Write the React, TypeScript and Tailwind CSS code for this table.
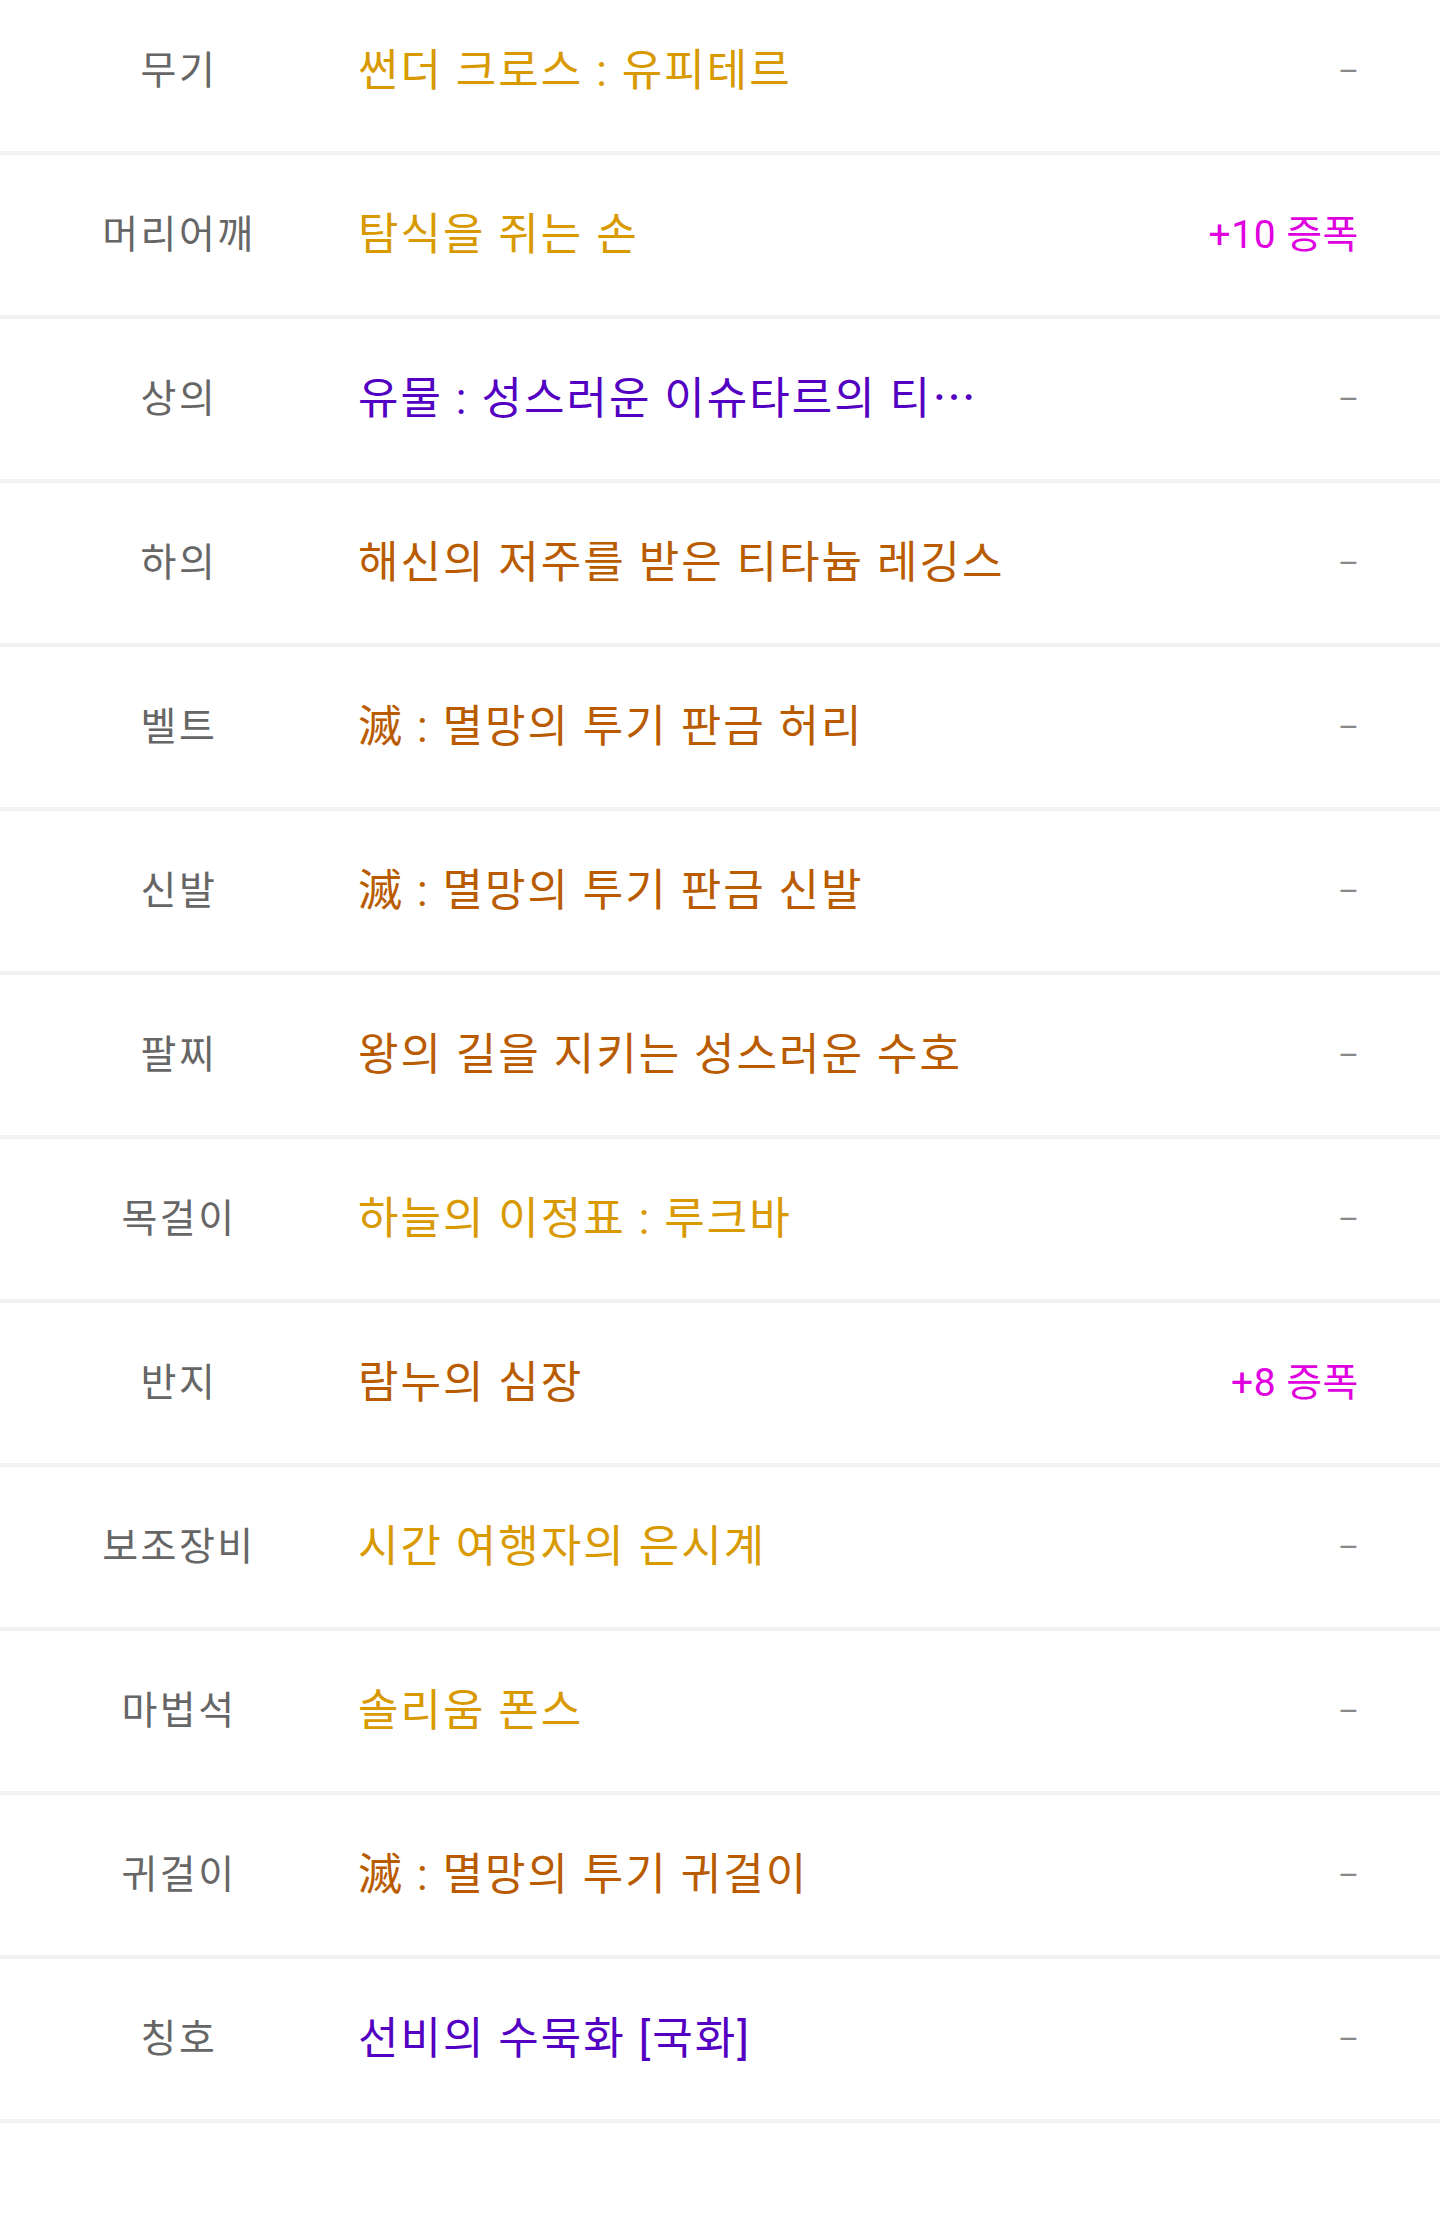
const GOLD = "text-[#d89a00]";
const ORANGE = "text-[#b95b00]";
const PURPLE = "text-[#5300c2]";

type Slot = {
	label: string;
	name: string;
	color: string;
	amp?: string;
};

const slots: Slot[] = [
	{ label: "무기", name: "썬더 크로스 : 유피테르", color: GOLD },
	{ label: "머리어깨", name: "탐식을 쥐는 손", color: GOLD, amp: "+10 증폭" },
	{ label: "상의", name: "유물 : 성스러운 이슈타르의 티⋯", color: PURPLE },
	{ label: "하의", name: "해신의 저주를 받은 티타늄 레깅스", color: ORANGE },
	{ label: "벨트", name: "滅 : 멸망의 투기 판금 허리", color: ORANGE },
	{ label: "신발", name: "滅 : 멸망의 투기 판금 신발", color: ORANGE },
	{ label: "팔찌", name: "왕의 길을 지키는 성스러운 수호", color: ORANGE },
	{ label: "목걸이", name: "하늘의 이정표 : 루크바", color: GOLD },
	{ label: "반지", name: "람누의 심장", color: ORANGE, amp: "+8 증폭" },
	{ label: "보조장비", name: "시간 여행자의 은시계", color: GOLD },
	{ label: "마법석", name: "솔리움 폰스", color: GOLD },
	{ label: "귀걸이", name: "滅 : 멸망의 투기 귀걸이", color: ORANGE },
	{ label: "칭호", name: "선비의 수묵화 [국화]", color: PURPLE },
];

const EquipRow = ({ slot }: { slot: Slot }) => {
	return (
		<div className="flex h-[164px] items-center border-b-4 border-[#f2f2f2] bg-white pr-[81px]">
			<div className="w-[358px] shrink-0 text-center text-[39px] leading-[1.2] tracking-[2.5px] text-[#666666]">
				{slot.label}
			</div>
			<div className={`min-w-0 flex-1 whitespace-nowrap text-[44px] leading-[1.2] tracking-[2px] ${slot.color}`}>
				{slot.name}
			</div>
			{slot.amp ? (
				<div className="shrink-0 text-[39px] leading-[1.2] tracking-[0.5px] text-[#e000df]">
					{slot.amp}
				</div>
			) : (
				<div className="shrink-0 font-['Roboto'] text-[32px] leading-[1.2] text-[#888888]">
					–
				</div>
			)}
		</div>
	);
};

const App = () => {
	return (
		<div className="min-h-[2240px] w-full overflow-hidden bg-white font-['Roboto','Noto_Sans_CJK_KR',sans-serif]">
			<div className="-mt-[9px]">
				{slots.map((slot) => (
					<EquipRow key={slot.label} slot={slot} />
				))}
			</div>
		</div>
	);
};

export default App;
